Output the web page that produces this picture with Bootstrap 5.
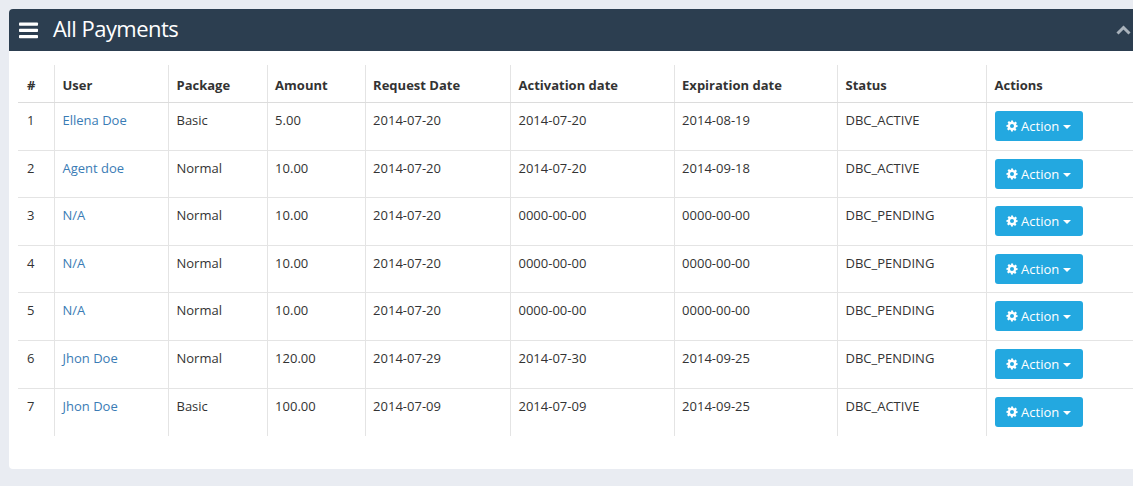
<!DOCTYPE html>
<html lang="en">

<head>
  <meta charset="UTF-8">
  <title>All Payments</title>
  <link href="https://cdn.jsdelivr.net/npm/bootstrap@5.3.3/dist/css/bootstrap.min.css" rel="stylesheet">
  <style>
    body {
      background-color: #e9ecf2;
      font-family: "Open Sans", "Liberation Sans", sans-serif;
      font-size: 13px;
      color: #333;
      overflow: hidden;
    }

    .pay-panel {
      margin: 9px -20px 18px 9px;
      border: 0;
      border-radius: 4px;
      overflow: hidden;
      background: #fff;
    }

    .pay-head {
      height: 42px;
      background-color: #2c3e50;
      color: #fff;
      padding: 0 22px 0 10px;
    }

    .pay-head h1 {
      font-size: 22px;
      font-weight: 400;
      letter-spacing: -0.55px;
      line-height: 1;
      margin: 0 0 4px 14px;
    }

    .pay-body {
      padding: 14px 0 33px 9px;
    }

    .pay-table {
      table-layout: fixed;
      width: 1125px;
      margin: 0;
      color: #333;
      font-size: 13px;
      line-height: 18.5px;
    }

    .pay-table th,
    .pay-table td {
      padding: 8px;
      vertical-align: top;
      border-bottom: 1px solid #e4e4e4;
      border-left: 1px solid #e4e4e4;
      box-shadow: none;
    }

    .pay-table th:first-child,
    .pay-table td:first-child {
      border-left: 0;
      padding-left: 9px;
    }

    .pay-table th:nth-child(4),
    .pay-table td:nth-child(4),
    .pay-table th:nth-child(5),
    .pay-table td:nth-child(5),
    .pay-table th:nth-child(7),
    .pay-table td:nth-child(7) {
      padding-left: 7.6px;
    }

    .pay-table thead th {
      height: 37.6px;
      padding-top: 11px;
      padding-bottom: 7px;
      font-weight: 700;
      border-bottom-color: #dcdcdc;
    }

    .pay-table tbody td {
      height: 47.6px;
    }

    .pay-table tbody tr:last-child td {
      border-bottom: 0;
    }

    .pay-table a {
      color: #3a7cb5;
      text-decoration: none;
    }

    .cw-1 { width: 36px; }
    .cw-2 { width: 114px; }
    .cw-3 { width: 99px; }
    .cw-4 { width: 98px; }
    .cw-5 { width: 145px; }
    .cw-6 { width: 164px; }
    .cw-7 { width: 163px; }
    .cw-8 { width: 149px; }

    .act-btn {
      width: 88px;
      height: 30px;
      padding: 0;
      font-size: 13px;
      line-height: 30px;
      border: 0;
      border-radius: 3px;
      background-color: #23a8e0;
      color: #fff;
      white-space: nowrap;
    }

    .act-btn:hover,
    .act-btn:focus {
      background-color: #23a8e0;
      color: #fff;
    }

    .act-btn svg {
      vertical-align: -1px;
    }

    .act-btn.dropdown-toggle::after {
      margin-left: 4px;
      vertical-align: 2px;
      border-top-width: 4px;
      border-left-width: 4px;
      border-right-width: 4px;
    }
  </style>
</head>

<body>

  <div class="card pay-panel">
    <div class="pay-head d-flex align-items-center">
      <svg width="20" height="17" viewBox="0 0 20 17" fill="#fff">
        <rect x="0" y="0.5" width="19" height="3.2" rx="0.8" />
        <rect x="0" y="6.8" width="19" height="3.2" rx="0.8" />
        <rect x="0" y="13.1" width="19" height="3.2" rx="0.8" />
      </svg>
      <h1>All Payments</h1>
      <svg class="ms-auto" width="15" height="10" viewBox="0 0 15 10" fill="none" stroke="#a9b2bb" stroke-width="3">
        <path d="M1.5 8.5 7.5 2.5 13.5 8.5" />
      </svg>
    </div>
    <div class="pay-body">
      <table class="table pay-table">
        <colgroup>
          <col class="cw-1"><col class="cw-2"><col class="cw-3"><col class="cw-4">
          <col class="cw-5"><col class="cw-6"><col class="cw-7"><col class="cw-8"><col>
        </colgroup>
        <thead>
          <tr>
            <th>#</th><th>User</th><th>Package</th><th>Amount</th><th>Request Date</th>
            <th>Activation date</th><th>Expiration date</th><th>Status</th><th>Actions</th>
          </tr>
        </thead>
        <tbody id="payRows"></tbody>
      </table>
    </div>
  </div>

  <script>
    const payments = [
      ["Ellena Doe", "Basic", "5.00", "2014-07-20", "2014-07-20", "2014-08-19", "DBC_ACTIVE"],
      ["Agent doe", "Normal", "10.00", "2014-07-20", "2014-07-20", "2014-09-18", "DBC_ACTIVE"],
      ["N/A", "Normal", "10.00", "2014-07-20", "0000-00-00", "0000-00-00", "DBC_PENDING"],
      ["N/A", "Normal", "10.00", "2014-07-20", "0000-00-00", "0000-00-00", "DBC_PENDING"],
      ["N/A", "Normal", "10.00", "2014-07-20", "0000-00-00", "0000-00-00", "DBC_PENDING"],
      ["Jhon Doe", "Normal", "120.00", "2014-07-29", "2014-07-30", "2014-09-25", "DBC_PENDING"],
      ["Jhon Doe", "Basic", "100.00", "2014-07-09", "2014-07-09", "2014-09-25", "DBC_ACTIVE"]
    ];

    const gear = `<svg width="12" height="12" viewBox="0 0 24 24" fill="#fff"><path fill-rule="evenodd" d="M10 1h4l.6 3.1 1.9.8 2.6-1.8 2.8 2.8-1.8 2.6.8 1.9L23 10v4l-3.1.6-.8 1.9 1.8 2.6-2.8 2.8-2.6-1.8-1.9.8L14 23h-4l-.6-3.1-1.9-.8-2.6 1.8-2.8-2.8 1.8-2.6-.8-1.9L1 14v-4l3.1-.6.8-1.9-1.8-2.6 2.8-2.8 2.6 1.8 1.9-.8zM12 8a4 4 0 1 0 0 8 4 4 0 0 0 0-8z"/></svg>`;

    document.getElementById("payRows").innerHTML = payments.map((p, i) => `
      <tr>
        <td>${i + 1}</td>
        <td><a href="#">${p[0]}</a></td>
        <td>${p[1]}</td><td>${p[2]}</td><td>${p[3]}</td><td>${p[4]}</td><td>${p[5]}</td><td>${p[6]}</td>
        <td><button class="btn act-btn dropdown-toggle" type="button">${gear} Action</button></td>
      </tr>`).join("");
  </script>
  <script src="https://cdn.jsdelivr.net/npm/bootstrap@5.3.3/dist/js/bootstrap.bundle.min.js"></script>

</body>

</html>
